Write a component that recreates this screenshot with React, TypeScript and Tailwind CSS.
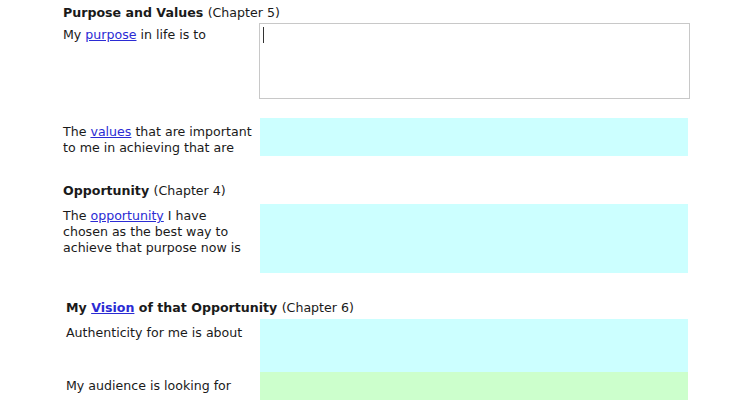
const font = { fontFamily: '"DejaVu Sans", Verdana, sans-serif' };

function Link({ children, bold }: { children: React.ReactNode; bold?: boolean }) {
  return <a href="#" className={`text-[#2b2bd4] underline ${bold ? 'font-bold' : ''}`}>{children}</a>;
}

function Row({ label, children, labelPad = 'pt-[6px]' }: { label: React.ReactNode; children: React.ReactNode; labelPad?: string }) {
  return (
    <div className="flex">
      <div className={`w-[196px] shrink-0 pr-1 ${labelPad}`}>{label}</div>
      {children}
    </div>
  );
}

export default function App() {
  return (
    <div className="min-h-screen bg-white text-[12.6px] leading-[16px] text-[#1a1a1a]" style={font}>
      <div className="pl-[63px] pt-[5px]">
        <h3 className="font-bold">Purpose and Values <span className="font-normal">(Chapter 5)</span></h3>

        <Row label={<p>My <Link>purpose</Link> in life is to</p>}>
          <div className="mt-[2px] w-[431px] h-[76px] border border-[#c8c8c8] px-[3px] py-[3px]">
            <div className="w-px h-[16px] bg-[#333]" />
          </div>
        </Row>

        <div className="mt-[19px]">
          <Row label={<p>The <Link>values</Link> that are important to me in achieving that are</p>}>
            <div className="ml-px w-[428px] h-[38px] bg-[#ccffff]" />
          </Row>
        </div>

        <h3 className="mt-[27px] font-bold">Opportunity <span className="font-normal">(Chapter 4)</span></h3>

        <div className="mt-[5px]">
          <Row label={<p>The <Link>opportunity</Link> I have chosen as the best way to achieve that purpose now is</p>} labelPad="pt-[4px]">
            <div className="ml-px w-[428px] h-[69px] bg-[#ccffff]" />
          </Row>
        </div>

        <div className="pl-[3px]">
          <h3 className="mt-[27px] font-bold">My <Link bold>Vision</Link> of that Opportunity <span className="font-normal">(Chapter 6)</span></h3>
          <div className="mt-[3px]">
            <Row label={<p>Authenticity for me is about</p>}>
              <div className="-ml-[2px] w-[428px] h-[53px] bg-[#ccffff]" />
            </Row>
            <Row label={<p>My audience is looking for</p>}>
              <div className="-ml-[2px] w-[428px] h-[53px] bg-[#ccffcc]" />
            </Row>
          </div>
        </div>
      </div>
    </div>
  );
}
